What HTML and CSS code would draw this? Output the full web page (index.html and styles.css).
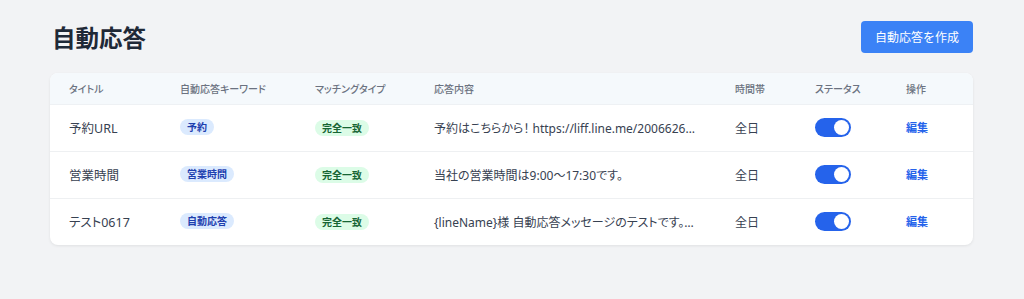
FILE: index.html
```html
<!DOCTYPE html>
<html lang="ja">
<head>
    <meta charset="UTF-8">
    <meta name="viewport" content="width=device-width, initial-scale=1.0">
    <title>自動応答</title>
    <link rel="stylesheet" href="styles.css">
</head>
<body>
    <div class="container">
        <div class="page-header">
            <h1>自動応答</h1>
            <button type="button" class="btn-primary">自動応答を作成</button>
        </div>

        <div class="card">
            <table class="reply-table">
                <colgroup>
                    <col class="col-title">
                    <col class="col-keyword">
                    <col class="col-match">
                    <col class="col-content">
                    <col class="col-time">
                    <col class="col-status">
                    <col class="col-action">
                </colgroup>
                <thead>
                    <tr>
                        <th>タイトル</th>
                        <th>自動応答キーワード</th>
                        <th>マッチングタイプ</th>
                        <th>応答内容</th>
                        <th>時間帯</th>
                        <th>ステータス</th>
                        <th>操作</th>
                    </tr>
                </thead>
                <tbody>
                    <tr>
                        <td>予約URL</td>
                        <td><span class="badge keyword">予約</span></td>
                        <td><span class="badge match">完全一致</span></td>
                        <td class="content">予約はこちらから！ https://liff.line.me/2006626…</td>
                        <td class="time">全日</td>
                        <td><span class="toggle on"><span class="knob"></span></span></td>
                        <td><a href="#" class="edit">編集</a></td>
                    </tr>
                    <tr>
                        <td>営業時間</td>
                        <td><span class="badge keyword">営業時間</span></td>
                        <td><span class="badge match">完全一致</span></td>
                        <td class="content">当社の営業時間は9:00～17:30です。</td>
                        <td class="time">全日</td>
                        <td><span class="toggle on"><span class="knob"></span></span></td>
                        <td><a href="#" class="edit">編集</a></td>
                    </tr>
                    <tr>
                        <td>テスト0617</td>
                        <td><span class="badge keyword">自動応答</span></td>
                        <td><span class="badge match">完全一致</span></td>
                        <td class="content">{lineName}様 自動応答メッセージのテストです。…</td>
                        <td class="time">全日</td>
                        <td><span class="toggle on"><span class="knob"></span></span></td>
                        <td><a href="#" class="edit">編集</a></td>
                    </tr>
                </tbody>
            </table>
        </div>
    </div>
</body>
</html>
```

FILE: styles.css
```css
* {
    margin: 0;
    padding: 0;
    box-sizing: border-box;
}

body {
    font-family: "Noto Sans", "Noto Sans CJK JP", sans-serif;
    background: #f2f3f5;
    color: #1f2937;
}

.container {
    padding: 21px 51px 40px 50px;
}

.page-header {
    display: flex;
    align-items: center;
    justify-content: space-between;
    height: 32px;
    margin-bottom: 20px;
}

h1 {
    font-size: 23.5px;
    font-weight: 700;
    color: #1f2937;
    line-height: 1;
    margin-left: 2px;
    margin-top: 4px;
}

.btn-primary {
    background: #3b82f6;
    color: white;
    border: none;
    height: 32px;
    padding: 0 14px;
    border-radius: 4px;
    font-family: inherit;
    font-size: 12px;
    cursor: pointer;
}

.card {
    background: white;
    border-radius: 8px;
    box-shadow: 0 1px 3px rgba(0, 0, 0, 0.08);
    overflow: hidden;
}

.reply-table {
    width: 100%;
    border-collapse: collapse;
    table-layout: fixed;
}

.col-title { width: 111px; }
.col-keyword { width: 135px; }
.col-match { width: 119px; }
.col-content { width: 301px; }
.col-time { width: 80px; }
.col-status { width: 91px; }

th {
    background: #f5f9fc;
    text-align: left;
    font-size: 10px;
    font-weight: 500;
    color: #6b7280;
    height: 31px;
    padding: 0 0 0 19px;
    font-feature-settings: "palt";
    border-bottom: 1px solid #eef1f4;
}

td {
    height: 47px;
    padding: 0 0 0 19px;
    font-size: 12.5px;
    color: #374151;
    border-bottom: 1px solid #eef0f2;
    font-feature-settings: "palt";
    white-space: nowrap;
}

tbody tr:last-child td {
    border-bottom: none;
}

td.content,
td.time {
    font-size: 12px;
}

.badge {
    display: inline-block;
    height: 16px;
    line-height: 16px;
    padding: 0 7px;
    border-radius: 999px;
    font-size: 10px;
    font-weight: 600;
}

.badge.keyword {
    background: #dbeafe;
    color: #1e40af;
    position: relative;
    top: -1px;
}

.badge.match {
    background: #dcfce7;
    color: #166534;
}

.toggle {
    display: inline-block;
    width: 36px;
    height: 19px;
    border-radius: 999px;
    background: #e5e7eb;
    position: relative;
    vertical-align: middle;
}

.toggle.on {
    background: #2563eb;
}

.knob {
    position: absolute;
    top: 2px;
    left: 2px;
    width: 15px;
    height: 15px;
    border-radius: 50%;
    background: white;
}

.toggle.on .knob {
    left: 19px;
}

.edit {
    color: #2563eb;
    font-size: 11px;
    font-weight: 600;
    text-decoration: none;
}
```
